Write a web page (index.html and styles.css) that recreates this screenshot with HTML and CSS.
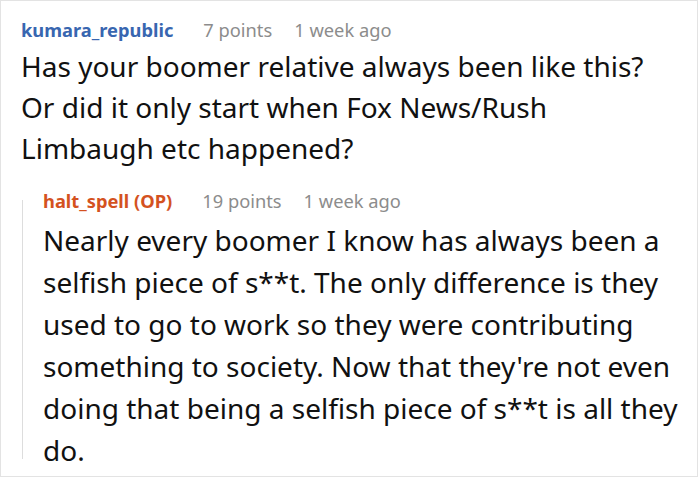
FILE: index.html
```html
<!DOCTYPE html>
<html lang="en">
<head>
<meta charset="utf-8">
<title>Comment thread</title>
<link rel="stylesheet" href="styles.css">
</head>
<body>
<div class="card">
  <div class="comment">
    <div class="meta">
      <span class="author author-blue">kumara_republic</span>
      <span class="info points">7 points</span>
      <span class="info time">1 week ago</span>
    </div>
    <p class="text">Has your boomer relative always been like this? Or did it only start when Fox News/Rush Limbaugh etc happened?</p>
  </div>
  <div class="reply">
    <div class="thread"></div>
    <div class="reply-body">
      <div class="meta">
        <span class="author author-orange">halt_spell (OP)</span>
        <span class="info points">19 points</span>
        <span class="info time">1 week ago</span>
      </div>
      <p class="text">Nearly every boomer I know has always been a selfish piece of s**t. The only difference is they used to go to work so they were contributing something to society. Now that they're not even doing that being a selfish piece of s**t is all they do.</p>
    </div>
  </div>
</div>
</body>
</html>
```
FILE: styles.css
```css
html, body {
  margin: 0;
  padding: 0;
  background: #ffffff;
}

body {
  font-family: "Noto Sans", "DejaVu Sans", sans-serif;
  color: #111111;
}

.card {
  box-sizing: border-box;
  width: 698px;
  height: 477px;
  border: 1px solid #e3e3e3;
  padding: 17px 8px 10px 20px;
  overflow: hidden;
}

.meta {
  display: flex;
  font-size: 18.3px;
  line-height: 24px;
  white-space: nowrap;
}

.author {
  font-weight: 700;
}

.author-blue {
  color: #3866b0;
}

.author-orange {
  color: #d4521f;
}

.info {
  color: #8c8c8c;
}

.points {
  margin-left: 30px;
}

.time {
  margin-left: 22px;
}

.text {
  margin: 4px 0 0 0;
  font-size: 28px;
  line-height: 41px;
}

.comment .text {
  padding-right: 20px;
}

.reply {
  display: flex;
  margin-top: 20px;
  margin-left: 1px;
}

.thread {
  flex: 0 0 1px;
  background: #dddddd;
  margin: 11px 20px 12px 0;
}

.reply-body {
  flex: 1;
  min-width: 0;
}

.reply .text {
  margin-top: 6px;
  line-height: 42px;
}
```
